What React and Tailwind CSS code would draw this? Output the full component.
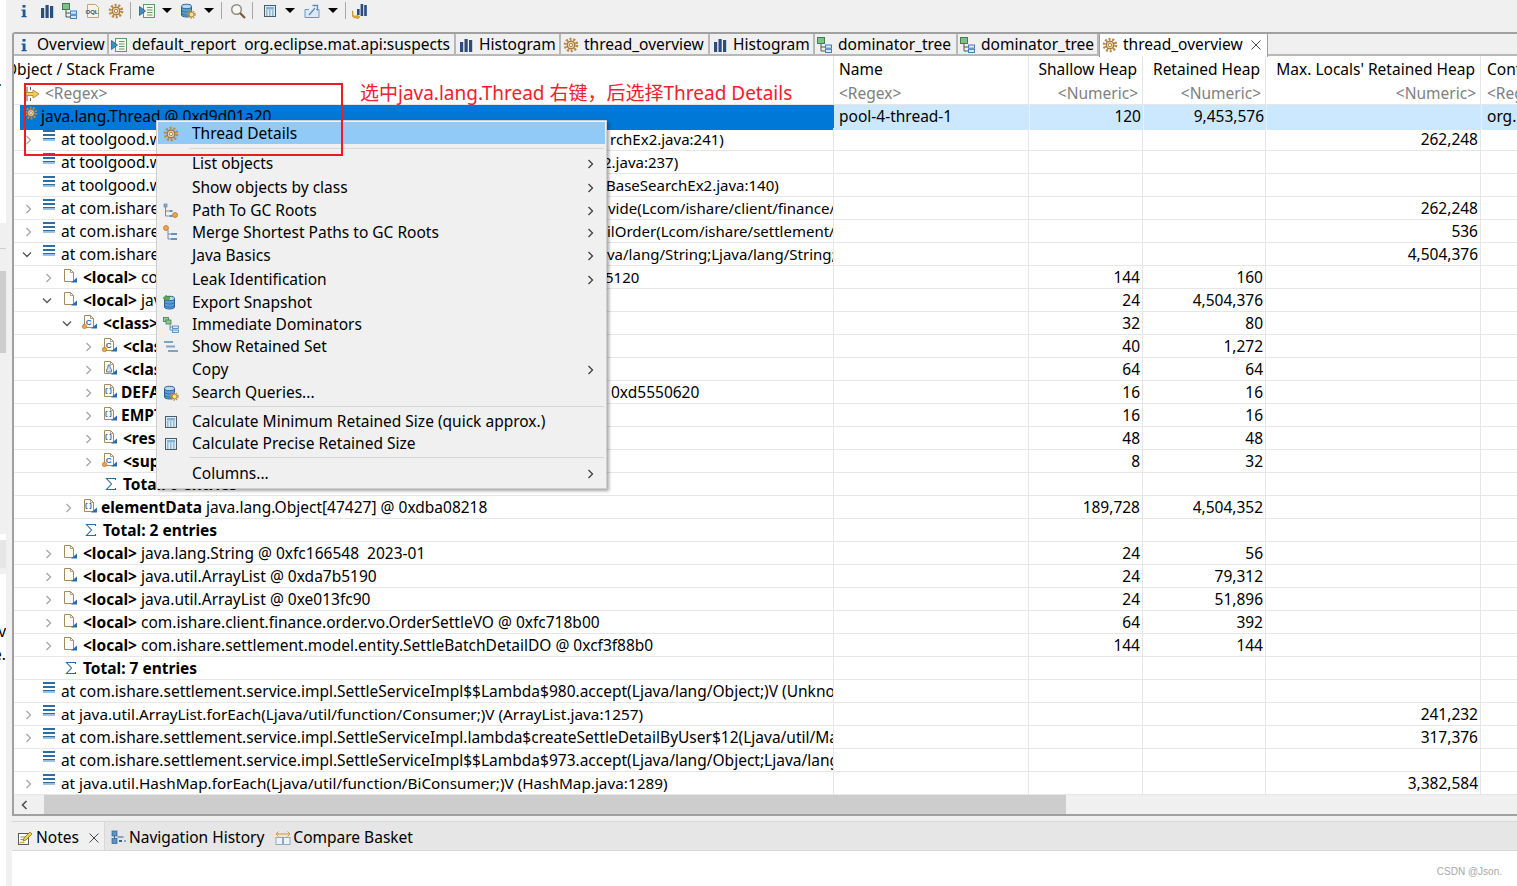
const Info = () => (
  <svg width="16" height="16" viewBox="0 0 16 16">
    <rect x="6.5" y="2" width="3" height="2.6" fill="#1f5a96" />
    <path d="M5.5 6.5h4v6.5h1.2v1.2H5.5V13h1.2V7.7H5.5z" fill="#1f5a96" />
  </svg>
)

const Bars = () => (
  <svg width="16" height="16" viewBox="0 0 16 16">
    <rect x="2" y="5" width="3.2" height="10" fill="#2a4d7c" />
    <rect x="6.5" y="2" width="3.2" height="13" fill="#2a4d7c" />
    <rect x="11" y="3" width="3.2" height="12" fill="#2a4d7c" />
  </svg>
)

const Tree = () => (
  <svg width="16" height="16" viewBox="0 0 16 16">
    <rect x="0.5" y="0.5" width="7" height="6" fill="#7fc08a" stroke="#3f7d54" />
    <path d="M4 7v7h4M4 10h4" fill="none" stroke="#555" />
    <rect x="8.5" y="8" width="6" height="3.2" fill="#d7e8f7" stroke="#3f7fbf" />
    <rect x="8.5" y="12.3" width="6" height="3.2" fill="#d7e8f7" stroke="#3f7fbf" />
  </svg>
)

const Oql = () => (
  <svg width="16" height="16" viewBox="0 0 16 16">
    <path d="M2.5 1.5h8l3 3v10h-11z" fill="#f7f3e8" stroke="#b9a67c" />
    <text x="0.5" y="11" fontSize="6" fontWeight="700" fill="#34577f" fontFamily="Liberation Sans">OQL</text>
  </svg>
)

const Gear = ({ size = 16 }) => (
  <svg width={size} height={size} viewBox="0 0 16 16">
    <circle cx="8" cy="8" r="5.8" fill="none" stroke="#b98a4c" strokeWidth="3" strokeDasharray="2 1.6" />
    <circle cx="8" cy="8" r="3.9" fill="#eccf9c" stroke="#96692e" strokeWidth="1" />
    <circle cx="8" cy="8" r="1.6" fill="#fff" stroke="#96692e" strokeWidth="0.8" />
  </svg>
)

const Report = () => (
  <svg width="16" height="16" viewBox="0 0 16 16">
    <rect x="4.5" y="1.5" width="11" height="13" fill="#f4f8ef" stroke="#5f9a62" />
    <path d="M8 4.5h5.5M8 7h5.5M8 9.5h5.5M8 12h5.5" stroke="#5f9a62" />
    <path d="M0.5 3.5l6 4.5-6 4.5z" fill="#3d8fc4" stroke="#1f4e79" strokeWidth="0.7" />
  </svg>
)

const Db = ({ arrow = false }) => (
  <svg width="16" height="16" viewBox="0 0 16 16">
    <path d="M1.5 3.5v8.5c0 1.2 2.4 2 5 2s5-.8 5-2V3.5z" fill="#5aa0dc" stroke="#2a5f9c" />
    <ellipse cx="6.5" cy="3.5" rx="5" ry="2.2" fill="#b7d8f2" stroke="#2a5f9c" />
    <path d="M1.5 7c0 1.2 2.4 2 5 2s5-.8 5-2M1.5 10c0 1.2 2.4 2 5 2s5-.8 5-2" fill="none" stroke="#2a5f9c" strokeWidth="0.8" />
    {arrow ? (
      <path d="M0 3l3.5-3v1.6h3v2.8h-3V6z" fill="#5aae4a" stroke="#3a7d32" strokeWidth="0.5" />
    ) : (
      <g>
        <circle cx="11.5" cy="11.5" r="3.4" fill="none" stroke="#c8963e" strokeWidth="1.8" strokeDasharray="1.4 1" />
        <circle cx="11.5" cy="11.5" r="2.4" fill="#f5dca3" stroke="#9a6f2a" strokeWidth="0.7" />
      </g>
    )}
  </svg>
)

const Magnifier = () => (
  <svg width="16" height="16" viewBox="0 0 16 16">
    <circle cx="6.5" cy="6.5" r="4.8" fill="#f7f7f2" stroke="#8a8a80" strokeWidth="1.4" />
    <path d="M10 10l5 5" stroke="#7a5a3a" strokeWidth="2.2" />
  </svg>
)

const Calc = () => (
  <svg width="16" height="16" viewBox="0 0 16 16">
    <rect x="2.5" y="2.5" width="11" height="11" fill="#dcebf5" stroke="#4a5a66" />
    <rect x="4" y="4" width="8" height="2.5" fill="#7fb2d6" />
    <path d="M4 8h1.5M7 8h1.5M10 8h1.5M4 10h1.5M7 10h1.5M10 10h1.5M4 12h1.5M7 12h1.5M10 12h1.5" stroke="#4f86b0" />
  </svg>
)

const Export = () => (
  <svg width="17" height="16" viewBox="0 0 17 16">
    <path d="M1 6.5v8h14v-8h-3M1 6.5h4" fill="#dbe9f6" stroke="#6d97c2" />
    <path d="M5 12l6-7" stroke="#5d8bb8" strokeWidth="1.3" fill="none" />
    <path d="M8.5 2.5h5v5" stroke="#5d8bb8" strokeWidth="1.3" fill="none" />
  </svg>
)

const BarsArrow = () => (
  <svg width="16" height="16" viewBox="0 0 16 16">
    <rect x="5" y="6" width="2.6" height="6" fill="#2a4d7c" />
    <rect x="8.6" y="1" width="2.6" height="12" fill="#2a4d7c" />
    <rect x="12.2" y="2" width="2.6" height="11" fill="#2a4d7c" />
    <path d="M1 8v3c0 1.5 1 2 3 2h1v-1.5l3 2.5-3 2.500V15H3.500C1.500 15 0 14 0 11.500V8z" fill="#e7ab2c" stroke="#a8771a" strokeWidth="0.4" />
  </svg>
)

const Lines = () => (
  <svg width="14" height="14" viewBox="0 0 14 14">
    <rect x="1" y="0" width="12" height="2" fill="#2b6ea6" />
    <rect x="1" y="4" width="12" height="2" fill="#2b6ea6" />
    <rect x="1" y="8" width="12" height="1.500" fill="#2b6ea6" />
    <rect x="1" y="9.500" width="12" height="1.500" fill="#9fc3e0" />
  </svg>
)

const PageBase = ({ children }) => (
  <svg width="16" height="16" viewBox="0 0 16 16">
    <path d="M2.500 1.500h6l3 3v9h-9z" fill="#fbfbf7" stroke="#a28c5f" />
    <path d="M8.500 1.500v3h3" fill="none" stroke="#a28c5f" strokeWidth="0.8" />
    <path d="M9 14.500l6-5v5z" fill="#2a6cab" />
    {children}
  </svg>
)

const Local = () => <PageBase />

const ClassIco = () => (
  <PageBase>
    <text x="3.800" y="10.500" fontSize="8" fontWeight="700" fill="#2a6cab" fontFamily="Liberation Sans">C</text>
    <circle cx="2.500" cy="12.500" r="2.200" fill="#f0a050" stroke="#b56d20" strokeWidth="0.6" />
  </PageBase>
)

const ObjIco = () => (
  <PageBase>
    <path d="M6 5h2v2l1.500 3v2h-5v-2L6 7z" fill="#cfe2f3" stroke="#2a6cab" strokeWidth="0.8" />
  </PageBase>
)

const ArrIco = () => (
  <PageBase>
    <path d="M5.500 5.500h-1.500v5h1.500M7.500 5.500h1.500v5h-1.500" fill="none" stroke="#2a6cab" />
  </PageBase>
)

const Sigma = () => (
  <svg width="14" height="14" viewBox="0 0 14 14">
    <path d="M11.500 3V1.500h-9l5 5.500-5 5.500h9V11" fill="none" stroke="#2a6ca0" strokeWidth="1.100" />
  </svg>
)

const RegexIco = () => (
  <svg width="16" height="16" viewBox="0 0 16 16">
    <path d="M2 1v5M2 10v5M5.500 1v3M5.500 12v3" stroke="#555" />
    <path d="M1 6.500h7V4l6 4-6 4V9.500H1z" fill="#f3cd60" stroke="#a87a1d" strokeWidth="0.8" />
  </svg>
)

const PathGc = () => (
  <svg width="16" height="16" viewBox="0 0 16 16">
    <rect x="1" y="1" width="3" height="3" fill="#8db4d6" stroke="#4a7aa6" strokeWidth="0.6" />
    <path d="M2.500 4v9h4M2.500 8h4" fill="none" stroke="#6a8eae" />
    <rect x="6.500" y="7" width="3" height="2" fill="#5d93c4" />
    <rect x="6.500" y="12" width="3" height="2" fill="#5d93c4" />
    <circle cx="12" cy="12" r="2.500" fill="#f0a050" stroke="#b56d20" strokeWidth="0.7" />
  </svg>
)

const MergeGc = () => (
  <svg width="16" height="16" viewBox="0 0 16 16">
    <circle cx="3" cy="3" r="2.500" fill="#f0a050" stroke="#b56d20" strokeWidth="0.7" />
    <path d="M5 5v9h3M5 9h3" fill="none" stroke="#6a8eae" />
    <rect x="8" y="8" width="6" height="2" fill="#5d93c4" />
    <rect x="8" y="13" width="6" height="2" fill="#5d93c4" />
  </svg>
)

const Immediate = () => (
  <svg width="16" height="16" viewBox="0 0 16 16">
    <rect x="0.500" y="0.500" width="5" height="4" fill="#8fc98f" stroke="#3f7d54" strokeWidth="0.8" />
    <rect x="3" y="3" width="5" height="4" fill="#8fc98f" stroke="#3f7d54" strokeWidth="0.8" />
    <path d="M7 7v6h2.500M7 10h2.500" fill="none" stroke="#6a8eae" />
    <rect x="9.500" y="9" width="6" height="2.400" fill="#d7e8f7" stroke="#3f7fbf" strokeWidth="0.8" />
    <rect x="9.500" y="13" width="6" height="2.400" fill="#d7e8f7" stroke="#3f7fbf" strokeWidth="0.8" />
  </svg>
)

const Retained = () => (
  <svg width="16" height="16" viewBox="0 0 16 16">
    <rect x="1" y="2" width="9" height="2" fill="#7fa3c2" />
    <rect x="3" y="6.500" width="9" height="2" fill="#7fa3c2" />
    <rect x="5" y="11" width="10" height="2" fill="#7fa3c2" />
  </svg>
)

const NotesIco = () => (
  <svg width="16" height="16" viewBox="0 0 16 16">
    <rect x="1.500" y="3.500" width="10" height="11" fill="#fff" stroke="#5a5a5a" />
    <path d="M3.500 7h5M3.500 9.500h3" stroke="#888" />
    <path d="M6 11l1-3 6-6 2 2-6 6z" fill="#f4d13c" stroke="#7a6420" strokeWidth="0.7" />
    <path d="M2.500 12.500h5" stroke="#d6b52a" strokeWidth="1.500" />
  </svg>
)

const NavIco = () => (
  <svg width="16" height="16" viewBox="0 0 16 16">
    <rect x="1" y="1" width="5" height="5" fill="#5e93c6" stroke="#2a5f9c" strokeWidth="0.7" />
    <rect x="1" y="8.500" width="5" height="5" fill="#5e93c6" stroke="#2a5f9c" strokeWidth="0.7" />
    <path d="M3.500 6v2.500M6.500 7h6M13 11h2" stroke="#3a5f88" />
    <rect x="8" y="10" width="3" height="2" fill="#3a5f88" />
  </svg>
)

const CompareIco = () => (
  <svg width="16" height="16" viewBox="0 0 16 16">
    <rect x="1" y="7.500" width="6.500" height="7" fill="#eef3f8" stroke="#8faabf" />
    <rect x="8.500" y="7.500" width="6.500" height="7" fill="#eef3f8" stroke="#8faabf" />
    <path d="M1 4h14" stroke="#c99a3c" />
    <path d="M3.500 1.500L1 4l2.500 2.500M12.500 1.500L15 4l-2.500 2.500" fill="none" stroke="#c99a3c" />
  </svg>
)

const Caret = () => <div className="h-0 w-0 border-x-[5px] border-t-[5px] border-x-transparent border-t-black" />

const ChevronRight = ({ color = '#a6a6a6' }) => (
  <svg width="7" height="10" viewBox="0 0 7 10">
    <path d="M1.500 1l4 4-4 4" fill="none" stroke={color} strokeWidth="1.300" />
  </svg>
)

const ChevronDown = () => (
  <svg width="10" height="7" viewBox="0 0 10 7">
    <path d="M1 1.500l4 4 4-4" fill="none" stroke="#555555" strokeWidth="1.300" />
  </svg>
)

const CloseX = () => (
  <svg width="10" height="10" viewBox="0 0 10 10">
    <path d="M0.500 0.500l9 9M9.500 0.500l-9 9" stroke="#333333" strokeWidth="0.900" />
  </svg>
)

const toolbar = [
  { w: 'w-[23px]', el: <Info /> },
  { w: 'w-[23px]', el: <Bars /> },
  { w: 'w-[23px]', el: <Tree /> },
  { w: 'w-[23px]', el: <Oql /> },
  { w: 'w-[24px]', el: <Gear /> },
  { sep: true, w: 'w-[4px]' },
  { w: 'w-[30px]', el: <Report /> },
  { w: 'w-[10px]', el: <Caret /> },
  { w: 'w-[32px]', el: <Db /> },
  { w: 'w-[10px]', el: <Caret /> },
  { sep: true, w: 'w-[14px]' },
  { w: 'w-[20px]', el: <Magnifier /> },
  { sep: true, w: 'w-[8px]' },
  { w: 'w-[28px]', el: <Calc /> },
  { w: 'w-[12px]', el: <Caret /> },
  { w: 'w-[32px]', el: <Export /> },
  { w: 'w-[10px]', el: <Caret /> },
  { sep: true, w: 'w-[14px]' },
  { w: 'w-[16px]', el: <BarsArrow /> },
]

const tabs = [
  { w: 'w-[95px]', label: 'Overview', icon: <Info /> },
  { w: 'w-[347px]', label: 'default_report  org.eclipse.mat.api:suspects', icon: <Report /> },
  { w: 'w-[105px]', label: 'Histogram', icon: <Bars /> },
  { w: 'w-[149px]', label: 'thread_overview', icon: <Gear /> },
  { w: 'w-[105px]', label: 'Histogram', icon: <Bars /> },
  { w: 'w-[143px]', label: 'dominator_tree', icon: <Tree /> },
  { w: 'w-[141px]', label: 'dominator_tree', icon: <Tree /> },
  { w: 'w-[169px]', label: 'thread_overview', icon: <Gear />, active: true },
]

const rows = [
  { sel: true, text: 'java.lang.Thread @ 0xd9d01a20', name: 'pool-4-thread-1', sh: '120', re: '9,453,576', con: 'org.' },
  { d: 0, c: 'r', icon: <Lines />, text: 'at toolgood.words', tail: 'rchEx2.java:241)', tm: 'ml-[446px] text-[15px]', max: '262,248' },
  { d: 0, icon: <Lines />, text: 'at toolgood.words', tail: '2.java:237)', tm: 'ml-[439px] text-[15px]' },
  { d: 0, icon: <Lines />, text: 'at toolgood.words', tail: 'BaseSearchEx2.java:140)', tm: 'ml-[442px] text-[15px]' },
  { d: 0, c: 'r', icon: <Lines />, text: 'at com.ishare.settle', tail: 'vide(Lcom/ishare/client/finance/order', tm: 'ml-[444px] text-[15px]', max: '262,248' },
  { d: 0, c: 'r', icon: <Lines />, text: 'at com.ishare.settle', tail: 'ilOrder(Lcom/ishare/settlement/model', tm: 'ml-[443px] text-[15px]', max: '536' },
  { d: 0, c: 'd', icon: <Lines />, text: 'at com.ishare.settle', tail: 'va/lang/String;Ljava/lang/String;Ljava', tm: 'ml-[443px] text-[15px]', max: '4,504,376' },
  { d: 1, c: 'r', icon: <Local />, bold: '<local>', text: ' com.ishare.client', tail: '5120', tm: 'ml-[441px] text-[15px]', sh: '144', re: '160' },
  { d: 1, c: 'd', clip: true, icon: <Local />, bold: '<local>', text: ' java.util.ArrayList', sh: '24', re: '4,504,376' },
  { d: 2, c: 'd', clip: true, icon: <ClassIco />, bold: '<class>', text: ' class java.util', sh: '32', re: '80' },
  { d: 3, c: 'r', clip: true, icon: <ClassIco />, bold: '<class>', text: ' class', sh: '40', re: '1,272' },
  { d: 3, c: 'r', clip: true, icon: <ObjIco />, bold: '<classloader>', text: '', sh: '64', re: '64' },
  { d: 3, c: 'r', icon: <ArrIco />, tight: true, bold: 'DEFAULTCAPACITY', text: '', tail: '0xd5550620', tm: 'ml-[447px]', sh: '16', re: '16' },
  { d: 3, c: 'r', clip: true, icon: <ArrIco />, tight: true, bold: 'EMPTY_ELEMENTDATA', text: '', sh: '16', re: '16' },
  { d: 3, c: 'r', clip: true, icon: <ArrIco />, bold: '<resolved_references>', text: '', sh: '48', re: '48' },
  { d: 3, c: 'r', clip: true, icon: <ClassIco />, bold: '<super>', text: '', sh: '8', re: '32' },
  { d: 3, sigma: true, bold: 'Total: 6 entries', text: '' },
  { d: 2, c: 'r', icon: <ArrIco />, tight: true, bold: 'elementData', text: ' java.lang.Object[47427] @ 0xdba08218', sh: '189,728', re: '4,504,352' },
  { d: 2, sigma: true, bold: 'Total: 2 entries', text: '' },
  { d: 1, c: 'r', icon: <Local />, bold: '<local>', text: ' java.lang.String @ 0xfc166548  2023-01', sh: '24', re: '56' },
  { d: 1, c: 'r', icon: <Local />, bold: '<local>', text: ' java.util.ArrayList @ 0xda7b5190', sh: '24', re: '79,312' },
  { d: 1, c: 'r', icon: <Local />, bold: '<local>', text: ' java.util.ArrayList @ 0xe013fc90', sh: '24', re: '51,896' },
  { d: 1, c: 'r', icon: <Local />, bold: '<local>', text: ' com.ishare.client.finance.order.vo.OrderSettleVO @ 0xfc718b00', sh: '64', re: '392' },
  { d: 1, c: 'r', icon: <Local />, bold: '<local>', text: ' com.ishare.settlement.model.entity.SettleBatchDetailDO @ 0xcf3f88b0', sh: '144', re: '144' },
  { d: 1, sigma: true, bold: 'Total: 7 entries', text: '' },
  { d: 0, icon: <Lines />, text: 'at com.ishare.settlement.service.impl.SettleServiceImpl$$Lambda$980.accept(Ljava/lang/Object;)V (Unknown Source)' },
  { d: 0, c: 'r', icon: <Lines />, fs: 'text-[15.3px]', text: 'at java.util.ArrayList.forEach(Ljava/util/function/Consumer;)V (ArrayList.java:1257)', max: '241,232' },
  { d: 0, c: 'r', icon: <Lines />, text: 'at com.ishare.settlement.service.impl.SettleServiceImpl.lambda$createSettleDetailByUser$12(Ljava/util/Map;Ljava/lang/String)', max: '317,376' },
  { d: 0, icon: <Lines />, text: 'at com.ishare.settlement.service.impl.SettleServiceImpl$$Lambda$973.accept(Ljava/lang/Object;Ljava/lang/Object;)V (Unknown)' },
  { d: 0, c: 'r', icon: <Lines />, fs: 'text-[15.3px]', text: 'at java.util.HashMap.forEach(Ljava/util/function/BiConsumer;)V (HashMap.java:1289)', max: '3,382,584' },
]

const menuItems = [
  { label: 'Thread Details', h: 'h-[22px]', icon: <Gear />, active: true },
  { sep: true, h: 'h-[8px]' },
  { label: 'List objects', h: 'h-[22px]', arrow: true },
  { label: 'Show objects by class', h: 'h-[25px]', arrow: true },
  { label: 'Path To GC Roots', h: 'h-[22px]', arrow: true, icon: <PathGc /> },
  { label: 'Merge Shortest Paths to GC Roots', h: 'h-[22px]', arrow: true, icon: <MergeGc /> },
  { label: 'Java Basics', h: 'h-[24px]', arrow: true },
  { label: 'Leak Identification', h: 'h-[24px]', arrow: true },
  { label: 'Export Snapshot', h: 'h-[22px]', icon: <Db arrow /> },
  { label: 'Immediate Dominators', h: 'h-[22px]', icon: <Immediate /> },
  { label: 'Show Retained Set', h: 'h-[22px]', icon: <Retained /> },
  { label: 'Copy', h: 'h-[24px]', arrow: true },
  { label: 'Search Queries...', h: 'h-[22px]', icon: <Db /> },
  { sep: true, h: 'h-[7px]' },
  { label: 'Calculate Minimum Retained Size (quick approx.)', h: 'h-[22px]', icon: <Calc /> },
  { label: 'Calculate Precise Retained Size', h: 'h-[22px]', icon: <Calc /> },
  { sep: true, h: 'h-[7px]' },
  { label: 'Columns...', h: 'h-[24px]', arrow: true },
]

const indentClass = ['w-[19px]', 'w-[39px]', 'w-[59px]', 'w-[79px]']

const gridCols = 'grid grid-cols-[820px_195px_114px_123px_215px_36px]'
const cellLine = 'border-r border-[#e6e6e6]'
const headLine = 'h-[23px] leading-[21px]'
const filterLine = 'h-[22px] leading-[22px] text-[#808080]'

const TreeRow = ({ row }) => {
  if (row.sel) {
    return (
      <div className={`${gridCols} h-[23px] border-b border-[#e6e6e6]`}>
        <div className="flex overflow-hidden bg-white pl-[6px]">
          <div className="flex w-full items-start bg-[#0078d7] pl-[4px] pt-[1px]">
            <div className="w-[17px] shrink-0"><Gear size={14} /></div>
            <span className="whitespace-pre leading-[21px] text-black">{row.text}</span>
          </div>
        </div>
        <div className="flex items-center bg-[#cce8ff] pb-[2px] pl-[5px]">{row.name}</div>
        <div className="flex items-center justify-end border-l border-[#e6f3ff] bg-[#cce8ff] pb-[2px] pr-[2px]">{row.sh}</div>
        <div className="flex items-center justify-end border-l border-[#e6f3ff] bg-[#cce8ff] pb-[2px] pr-[2px]">{row.re}</div>
        <div className="border-l border-[#e6f3ff] bg-[#cce8ff]" />
        <div className="flex items-center overflow-hidden border-l border-[#e6f3ff] bg-[#cce8ff] pb-[2px] pl-[5px]">{row.con}</div>
      </div>
    )
  }

  let slot = 'w-[19px]'
  if (row.bold) slot = row.tight ? 'w-[19px]' : 'w-[21px]'

  const first = (
    <>
      <div className={`${indentClass[row.d]} flex shrink-0 items-center justify-end pb-[2px] pr-[1px]`}>
        {row.c === 'r' ? <ChevronRight /> : row.c === 'd' ? <ChevronDown /> : null}
      </div>
      <div className={`${slot} ml-[9px] shrink-0 self-start pt-[2px]`}>
        {row.sigma ? <div className="pl-[2px] pt-[2px]"><Sigma /></div> : row.icon}
      </div>
      <span className={`whitespace-pre leading-[23px] ${row.fs || ''}`}>
        {row.bold ? <b className="font-bold">{row.bold}</b> : null}
        {row.text}
      </span>
    </>
  )

  return (
    <div className={`${gridCols} h-[23px] border-b border-[#e6e6e6]`}>
      <div className={`flex overflow-hidden ${cellLine}`}>
        {row.tail || row.clip ? (
          <>
            <div className="flex w-[150px] shrink-0 overflow-hidden">{first}</div>
            {row.tail ? <div className={`${row.tm} shrink-0 whitespace-pre leading-[23px]`}>{row.tail}</div> : null}
          </>
        ) : (
          first
        )}
      </div>
      <div className={cellLine} />
      <div className={`flex items-center justify-end pb-[2px] pr-[2px] ${cellLine}`}>{row.sh}</div>
      <div className={`flex items-center justify-end pb-[2px] pr-[2px] ${cellLine}`}>{row.re}</div>
      <div className={`flex items-center justify-end pb-[2px] pr-[2px] ${cellLine}`}>{row.max}</div>
      <div />
    </div>
  )
}

export default function App() {
  return (
    <div className="relative flex h-[886px] w-[1517px] overflow-hidden bg-white text-[15.5px] text-black font-['Noto_Sans','Noto_Sans_CJK_SC',sans-serif]">
      {/* sliver of the neighbouring view on the far left */}
      <div className="flex w-[12px] shrink-0">
        <div className="flex w-[6px] flex-col overflow-hidden">
          <div className="h-[223px] bg-white pt-[84px]">
            <div className="h-[2px] w-[1px] bg-[#2a6cab]" />
          </div>
          <div className="h-[26px] border-b border-[#d0d0d0] bg-[#f0f0f0]" />
          <div className="h-[22px] bg-[#f0f0f0]" />
          <div className="h-[82px] bg-[#cdcdcd]" />
          <div className="h-[181px] bg-[#f0f0f0]" />
          <div className="h-[6px] bg-white" />
          <div className="h-[28px] bg-[#e6e6e6]" />
          <div className="h-[6px] bg-[#f0f0f0]" />
          <div className="flex-1 bg-white pt-[46px]">
            <div className="flex h-[23px] items-center justify-end leading-none">v</div>
            <div className="flex h-[23px] items-center justify-end leading-none">e.</div>
          </div>
        </div>
        <div className="w-[6px] bg-[#f0f0f0]" />
      </div>

      <div className="flex w-[1505px] shrink-0 flex-col">
        <div className="flex h-[32px] shrink-0 items-start bg-[#f0f0f0] pt-[2px]">
          {toolbar.map((item, i) =>
            item.sep ? (
              <div key={i} className={`${item.w} flex h-[17px] justify-center`}>
                <div className="h-full w-[1px] bg-[#a8a8a8]" />
              </div>
            ) : (
              <div key={i} className={`${item.w} flex h-[17px] items-center justify-center`}>
                {item.el}
              </div>
            ),
          )}
        </div>

        <div className="flex h-[784px] shrink-0 flex-col rounded-tl-[3px] border-x-0 border-b-2 border-l-2 border-t-2 border-[#a0a0a0]">
          <div className="flex h-[22px] shrink-0 bg-[#f0f0f0]">
            {tabs.map((tab, i) => (
              <div
                key={i}
                className={`${tab.w} flex shrink-0 items-center gap-[5px] overflow-hidden whitespace-pre pl-[2px] ${tab.active ? '-mt-[1px] h-[24px] rounded-t-[2px] border-x border-t border-[#a0a0a0] bg-white pb-[1px]' : 'border-b-2 border-r-2 border-[#a0a0a0]/70 pt-[2px]'}`}
              >
                <span className="flex w-[16px] shrink-0 justify-center">{tab.icon}</span>
                <span>{tab.label}</span>
                {tab.active ? (
                  <span className="ml-[3px]">
                    <CloseX />
                  </span>
                ) : null}
              </div>
            ))}
            <div className="flex-1 border-b-2 border-[#a0a0a0]/70" />
          </div>

          <div className={`${gridCols} h-[49px] shrink-0 border-b border-[#e6e6e6]`}>
            <div className={`overflow-hidden pt-[3px] ${cellLine}`}>
              <div className={`${headLine} -ml-[9px] whitespace-pre`}>Object / Stack Frame</div>
              <div className="flex h-[22px] items-center gap-[4px] pl-[11px] pt-[2px] text-[#808080]">
                <RegexIco />
                <span>&lt;Regex&gt;</span>
              </div>
            </div>
            <div className={`pl-[5px] pt-[3px] ${cellLine}`}>
              <div className={headLine}>Name</div>
              <div className={filterLine}>&lt;Regex&gt;</div>
            </div>
            <div className={`pt-[3px] text-right ${cellLine}`}>
              <div className={`${headLine} pr-[5px]`}>Shallow Heap</div>
              <div className={`${filterLine} pr-[4px]`}>&lt;Numeric&gt;</div>
            </div>
            <div className={`pt-[3px] text-right ${cellLine}`}>
              <div className={`${headLine} pr-[5px]`}>Retained Heap</div>
              <div className={`${filterLine} pr-[4px]`}>&lt;Numeric&gt;</div>
            </div>
            <div className={`pt-[3px] text-right ${cellLine}`}>
              <div className={`${headLine} pr-[5px]`}>Max. Locals' Retained Heap</div>
              <div className={`${filterLine} pr-[4px]`}>&lt;Numeric&gt;</div>
            </div>
            <div className="overflow-hidden whitespace-pre pl-[6px] pt-[3px]">
              <div className={headLine}>Context Class Loader</div>
              <div className={filterLine}>&lt;Regex&gt;</div>
            </div>
          </div>

          <div className="flex-1 overflow-hidden">
            {rows.map((row, i) => (
              <TreeRow key={i} row={row} />
            ))}
          </div>

          <div className="flex h-[19px] shrink-0 bg-[#f0f0f0]">
            <div className="flex w-[30px] items-center pl-[6px]">
              <svg width="8" height="10" viewBox="0 0 8 10">
                <path d="M6.500 1l-4 4 4 4" fill="none" stroke="#505050" strokeWidth="1.600" />
              </svg>
            </div>
            <div className="w-[1022px] bg-[#cdcdcd]" />
          </div>
        </div>

        <div className="h-[5px] shrink-0 bg-[#f0f0f0]" />

        <div className="flex h-[30px] shrink-0 items-stretch border-y border-[#d8d8d8] bg-[#e6e6e6]">
          <div className="flex w-[93px] items-center gap-[3px] border-r border-[#d8d8d8] bg-[#f0f0f0] pl-[5px] pt-[4px]">
            <NotesIco />
            <span>Notes</span>
            <span className="ml-[7px]">
              <CloseX />
            </span>
          </div>
          <div className="flex items-center gap-[2px] pl-[6px] pt-[4px]">
            <NavIco />
            <span>Navigation History</span>
          </div>
          <div className="flex items-center gap-[2px] pl-[11px] pt-[4px]">
            <CompareIco />
            <span>Compare Basket</span>
          </div>
        </div>

        <div className="flex flex-1 items-end justify-end pb-[7px] pr-[15px] text-[10px] text-[#a8a8a8] font-['Liberation_Sans',sans-serif]">
          CSDN @Json.
        </div>
      </div>

      {/* context menu */}
      <div className="absolute left-[156px] top-[120px] h-[369px] w-[451px] border border-[#cfcfcf] bg-[#f0f0f0] p-[1px] shadow-[2px_2px_3px_rgba(0,0,0,0.35)]">
        {menuItems.map((item, i) =>
          item.sep ? (
            <div key={i} className={`${item.h} flex items-center pl-[31px] pr-[1px]`}>
              <div className="h-[1px] w-full bg-[#d7d7d7]" />
            </div>
          ) : (
            <div key={i} className={`${item.h} flex items-center pt-[2px] ${item.active ? 'bg-[#91c9f7]' : ''}`}>
              <div className="flex w-[34px] shrink-0 justify-center pr-[8px]">{item.icon}</div>
              <span className="whitespace-pre">{item.label}</span>
              {item.arrow ? (
                <span className="ml-auto pr-[11px] leading-none">
                  <ChevronRight color="#404040" />
                </span>
              ) : null}
            </div>
          ),
        )}
      </div>

      {/* annotation drawn on top of the screenshot */}
      <div className="pointer-events-none absolute left-[24px] top-[83px] h-[73px] w-[319px] border-2 border-[#ec1c24]" />
      <div className="absolute left-[360px] top-[79px] whitespace-pre text-[19px] leading-[28px] text-[#f0202c]">
        选中java.lang.Thread 右键，后选择Thread Details
      </div>
    </div>
  )
}
